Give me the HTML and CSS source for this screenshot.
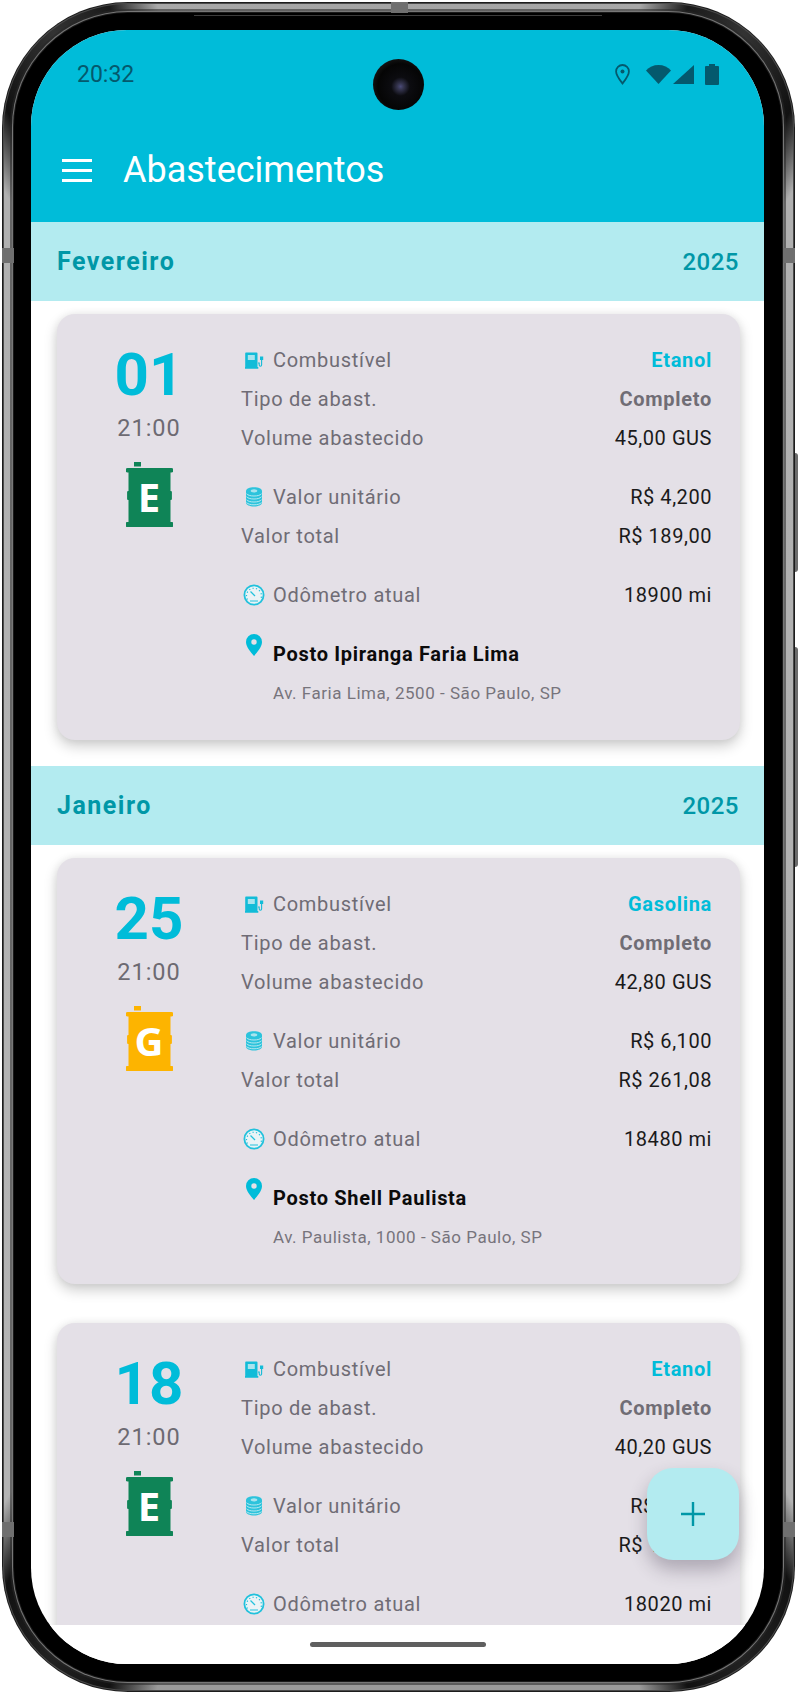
FILE: index.html
```html
<!DOCTYPE html>
<html lang="pt-BR">

<head>
    <meta charset="UTF-8">
    <meta name="viewport" content="width=device-width, initial-scale=1.0">
    <title>Abastecimentos</title>
    <link rel="stylesheet" href="styles.css">
</head>

<body>
    <svg class="defs" width="0" height="0">
        <symbol id="icon-pump" viewBox="0 0 22 22">
            <path fill="#12bcd8" d="M3 3.500h10.500a1 1 0 0 1 1 1V18h.8v1.800H2V18h.2V4.500a1 1 0 0 1 .8-1z"/>
            <path fill="#a9e4ee" d="M4.800 6h7v5h-7z"/>
            <path fill="none" stroke="#12bcd8" stroke-width="1.100" d="M15 14h1.200v2a1.200 1.200 0 0 0 2.400 0v-6"/>
            <path fill="#12bcd8" d="M17 7.500h3.200V11H17z"/>
        </symbol>
        <symbol id="icon-coins" viewBox="0 0 22 22">
            <path fill="#2cc3dc" d="M3 5c0-2.200 3.600-3.700 8-3.700S19 2.800 19 5v11.500c0 2.400-3.600 4-8 4s-8-1.600-8-4z"/>
            <ellipse cx="11" cy="4.800" rx="3.300" ry="1.600" fill="#a9e4ee"/>
            <path fill="none" stroke="#c5ecf2" stroke-width="0.900" d="M3.500 7.800c1.500 1.500 4 2.200 7.500 2.200s6-.7 7.500-2.200M3.500 10.800c1.500 1.500 4 2.200 7.500 2.200s6-.7 7.500-2.200M3.500 13.800c1.500 1.500 4 2.200 7.500 2.200s6-.7 7.500-2.200M3.500 16.600c1.500 1.500 4 2.200 7.500 2.200s6-.7 7.500-2.200"/>
        </symbol>
        <symbol id="icon-gauge" viewBox="0 0 22 22">
            <circle cx="11" cy="11" r="9.600" fill="#eaf3f6" stroke="#22c1dc" stroke-width="1.800"/>
            <path fill="none" stroke="#22c1dc" stroke-width="1.200" stroke-dasharray="1.200 2.300" d="M4.500 15.500A7.500 7.500 0 1 1 17.500 15.500"/>
            <path stroke="#22c1dc" stroke-width="1.300" d="M7.500 7.500l4.500 4.500"/>
            <path stroke="#22c1dc" stroke-width="2" stroke-dasharray="1 1" d="M7.500 17h7"/>
        </symbol>
        <symbol id="icon-pin" viewBox="0 0 16 22">
            <path fill="#00bcd9" fill-rule="evenodd" d="M8 0a8 8 0 0 1 8 8c0 5-5 10.500-8 14C5 18.500 0 13 0 8a8 8 0 0 1 8-8zm0 5.300a2.700 2.700 0 1 0 0 5.400 2.700 2.700 0 0 0 0-5.400z"/>
        </symbol>
        <symbol id="barrel-shape" viewBox="0 0 47 65">
            <path d="M8 0h7v4.500H8zM1.500 6h44a2.250 2.250 0 0 1 0 4.500H44.500V29h.4a1 1 0 0 1 1 1v7a1 1 0 0 1-1 1h-.4v22h1a2.500 2.500 0 0 1 0 5h-44a2.500 2.500 0 0 1 0-5h1V38h-.4a1 1 0 0 1-1-1v-7a1 1 0 0 1 1-1h.4V10.500h-1a2.250 2.250 0 0 1 0-4.500z"/>
        </symbol>
    </svg>

    <div class="phone">
        <span class="band band-top"></span>
        <span class="band band-left-up"></span>
        <span class="band band-right-up"></span>
        <span class="band band-left-down"></span>
        <span class="band band-right-down"></span>
        <span class="side-key key-1"></span>
        <span class="side-key key-2"></span>

        <div class="metal">
            <div class="bezel">
                <span class="bezel-step"></span>
                <div class="screen">
                    <span class="camera"></span>

                    <header class="app-bar">
                        <div class="status-bar">
                            <span class="clock">20:32</span>
                            <div class="status-icons">
                                <svg class="st-pin" viewBox="0 0 15 21"><path fill="none" stroke="#04596d" stroke-width="1.800" d="M7.500 1a6.400 6.400 0 0 1 6.400 6.400c0 4-3.800 8.600-6.400 12-2.600-3.400-6.400-8-6.400-12A6.400 6.400 0 0 1 7.500 1z"/><circle cx="7.500" cy="7.500" r="2" fill="#04596d"/></svg>
                                <svg class="st-wifi" viewBox="0 0 25 19"><path fill="#04596d" d="M0 5.500C3 2 7.500 0 12.500 0S22 2 25 5.500L12.500 19z"/></svg>
                                <svg class="st-signal" viewBox="0 0 21 19"><path fill="#04596d" d="M0 19L21 0v19z"/></svg>
                                <svg class="st-battery" viewBox="0 0 14 21"><path fill="#04596d" d="M4 0h6v2h3a1 1 0 0 1 1 1v17a1 1 0 0 1-1 1H1a1 1 0 0 1-1-1V3a1 1 0 0 1 1-1h3z"/></svg>
                            </div>
                        </div>
                        <div class="toolbar">
                            <div class="menu-icon"><span></span><span></span><span></span></div>
                            <h1 class="title">Abastecimentos</h1>
                        </div>
                    </header>

                    <main class="list">
                        <div class="month-bar">
                            <span class="month">Fevereiro</span>
                            <span class="year">2025</span>
                        </div>

                        <article class="card">
                            <div class="date-col">
                                <div class="day">01</div>
                                <div class="time">21:00</div>
                                <svg class="barrel barrel-e" viewBox="0 0 47 65"><use href="#barrel-shape"/><text class="barrel-letter" x="23" y="50">E</text></svg>
                            </div>
                            <div class="info-col">
                                <div class="group">
                                    <div class="row"><span class="label"><svg class="ic"><use href="#icon-pump"/></svg>Combustível</span><span class="fuel">Etanol</span></div>
                                    <div class="row"><span class="label">Tipo de abast.</span><span class="kind">Completo</span></div>
                                    <div class="row"><span class="label">Volume abastecido</span><span class="value">45,00 GUS</span></div>
                                </div>
                                <div class="group">
                                    <div class="row"><span class="label"><svg class="ic"><use href="#icon-coins"/></svg>Valor unitário</span><span class="value">R$ 4,200</span></div>
                                    <div class="row"><span class="label">Valor total</span><span class="value">R$ 189,00</span></div>
                                </div>
                                <div class="group">
                                    <div class="row"><span class="label"><svg class="ic"><use href="#icon-gauge"/></svg>Odômetro atual</span><span class="value">18900 mi</span></div>
                                </div>
                                <div class="group">
                                    <div class="row"><span class="place"><svg class="ic ic-pin"><use href="#icon-pin"/></svg>Posto Ipiranga Faria Lima</span></div>
                                    <div class="row"><span class="address">Av. Faria Lima, 2500 - São Paulo, SP</span></div>
                                </div>
                            </div>
                        </article>

                        <div class="month-bar month-bar-next">
                            <span class="month">Janeiro</span>
                            <span class="year">2025</span>
                        </div>

                        <article class="card">
                            <div class="date-col">
                                <div class="day">25</div>
                                <div class="time">21:00</div>
                                <svg class="barrel barrel-g" viewBox="0 0 47 65"><use href="#barrel-shape"/><text class="barrel-letter" x="23" y="50">G</text></svg>
                            </div>
                            <div class="info-col">
                                <div class="group">
                                    <div class="row"><span class="label"><svg class="ic"><use href="#icon-pump"/></svg>Combustível</span><span class="fuel">Gasolina</span></div>
                                    <div class="row"><span class="label">Tipo de abast.</span><span class="kind">Completo</span></div>
                                    <div class="row"><span class="label">Volume abastecido</span><span class="value">42,80 GUS</span></div>
                                </div>
                                <div class="group">
                                    <div class="row"><span class="label"><svg class="ic"><use href="#icon-coins"/></svg>Valor unitário</span><span class="value">R$ 6,100</span></div>
                                    <div class="row"><span class="label">Valor total</span><span class="value">R$ 261,08</span></div>
                                </div>
                                <div class="group">
                                    <div class="row"><span class="label"><svg class="ic"><use href="#icon-gauge"/></svg>Odômetro atual</span><span class="value">18480 mi</span></div>
                                </div>
                                <div class="group">
                                    <div class="row"><span class="place"><svg class="ic ic-pin"><use href="#icon-pin"/></svg>Posto Shell Paulista</span></div>
                                    <div class="row"><span class="address">Av. Paulista, 1000 - São Paulo, SP</span></div>
                                </div>
                            </div>
                        </article>

                        <article class="card card-next">
                            <div class="date-col">
                                <div class="day">18</div>
                                <div class="time">21:00</div>
                                <svg class="barrel barrel-e" viewBox="0 0 47 65"><use href="#barrel-shape"/><text class="barrel-letter" x="23" y="50">E</text></svg>
                            </div>
                            <div class="info-col">
                                <div class="group">
                                    <div class="row"><span class="label"><svg class="ic"><use href="#icon-pump"/></svg>Combustível</span><span class="fuel">Etanol</span></div>
                                    <div class="row"><span class="label">Tipo de abast.</span><span class="kind">Completo</span></div>
                                    <div class="row"><span class="label">Volume abastecido</span><span class="value">40,20 GUS</span></div>
                                </div>
                                <div class="group">
                                    <div class="row"><span class="label"><svg class="ic"><use href="#icon-coins"/></svg>Valor unitário</span><span class="value">R$ 4,150</span></div>
                                    <div class="row"><span class="label">Valor total</span><span class="value">R$ 166,83</span></div>
                                </div>
                                <div class="group">
                                    <div class="row"><span class="label"><svg class="ic"><use href="#icon-gauge"/></svg>Odômetro atual</span><span class="value">18020 mi</span></div>
                                </div>
                            </div>
                        </article>
                    </main>

                    <div class="gesture-bar"><span class="home-pill"></span></div>

                    <button class="fab">
                        <svg viewBox="0 0 24 24" width="24" height="24"><path fill="#0097a7" d="M10.800 0h2.400v10.800H24v2.400H13.200V24h-2.400V13.200H0v-2.400h10.800z"/></svg>
                    </button>
                </div>
            </div>
        </div>
    </div>
</body>

</html>
```

FILE: styles.css
```css
* {
    box-sizing: border-box;
}

html,
body {
    margin: 0;
    height: 1693px;
    overflow: hidden;
    background-color: #fff;
}

body {
    padding: 2px 0 0 2px;
    font-family: Roboto, "Liberation Sans", sans-serif;
}

.defs {
    position: absolute;
}

/* phone frame */
.phone {
    position: relative;
    width: 793px;
    height: 1690px;
    padding: 1px;
    border-radius: 126px;
    background-color: #1c1c1c;
}

.metal {
    height: 100%;
    padding: 10px 12px 10px 11px;
    border-radius: 125px;
    background: conic-gradient(#a4a4a4 0deg, #a8a8a8 16deg, #1a1a1a 19deg, #333 23deg, #111 28deg, #b0b0b0 31deg, #b4b4b4 149deg, #111 152deg, #222 157deg, #111 161deg, #9a9a9a 164deg, #9a9a9a 196deg, #111 199deg, #222 203deg, #111 208deg, #b4b4b4 211deg, #b0b0b0 329deg, #111 332deg, #333 337deg, #1a1a1a 341deg, #a8a8a8 344deg, #a4a4a4 360deg);
    box-shadow: inset 0 0 0 1px #4a4a4a;
}

.bezel {
    position: relative;
    height: 100%;
    padding: 17px 18px 17px 17px;
    border-radius: 114px;
    background-color: #000;
    box-shadow: 0 0 0 1px #1a1a1a, 0 0 0 2px #777, 0 0 0 4px rgba(40, 40, 40, 0.55);
}

.bezel-step {
    position: absolute;
    top: 2px;
    left: 180px;
    right: 180px;
    height: 1px;
    background-color: #3c3c3c;
}

.band {
    position: absolute;
    z-index: 1;
    background-color: #6f6f6f;
}

.band-top {
    top: 0;
    left: 389px;
    width: 17px;
    height: 11px;
}

.band-left-up,
.band-right-up,
.band-left-down,
.band-right-down {
    width: 12px;
    height: 15px;
}

.band-left-up {
    top: 246px;
    left: 0;
}

.band-right-up {
    top: 246px;
    right: 0;
}

.band-left-down {
    top: 1520px;
    left: 0;
}

.band-right-down {
    top: 1520px;
    right: 0;
}

.side-key {
    position: absolute;
    right: -3px;
    width: 3px;
    border-radius: 0 3px 3px 0;
    background-color: #6b6b6b;
}

.key-1 {
    top: 451px;
    height: 119px;
}

.key-2 {
    top: 645px;
    height: 220px;
}

/* screen */
.screen {
    position: relative;
    display: flex;
    flex-direction: column;
    height: 100%;
    border-radius: 96px;
    overflow: hidden;
    background-color: #fff;
}

.camera {
    position: absolute;
    top: 29px;
    left: 342px;
    width: 51px;
    height: 51px;
    border-radius: 50%;
    background: radial-gradient(circle at 54% 54%, #4a4a78 0, #35354f 8%, #0c0c10 24%, #050505 58%, #121212 72%, #0a0a0a 100%);
}

.app-bar {
    background-color: #00bcd9;
}

.status-bar {
    display: flex;
    align-items: center;
    justify-content: space-between;
    height: 88px;
    padding: 0 45px 0 46px;
}

.clock {
    font-size: 23px;
    color: #04596d;
}

.status-icons {
    display: flex;
    align-items: center;
}

.st-pin {
    width: 15px;
    height: 21px;
    margin-right: 16px;
}

.st-wifi {
    width: 25px;
    height: 19px;
    margin-right: 2px;
}

.st-signal {
    width: 21px;
    height: 19px;
    margin-right: 11px;
}

.st-battery {
    width: 14px;
    height: 21px;
}

.toolbar {
    display: flex;
    align-items: center;
    height: 104px;
    padding-left: 31px;
}

.menu-icon {
    display: flex;
    flex-direction: column;
    gap: 7px;
    width: 30px;
    margin-right: 31px;
}

.menu-icon span {
    height: 3px;
    background-color: #fff;
}

.title {
    margin: 0;
    font-size: 36px;
    font-weight: 400;
    letter-spacing: 0;
    color: #fff;
}

/* list */
.list {
    flex: 1;
    min-height: 0;
    overflow: hidden;
}

.month-bar {
    display: flex;
    align-items: center;
    justify-content: space-between;
    height: 79px;
    padding: 0 25px 0 26px;
    background-color: #b3ebf0;
    color: #0097a7;
}

.month-bar-next {
    margin-top: 26px;
}

.month {
    font-size: 25px;
    font-weight: 700;
    letter-spacing: 1.5px;
}

.year {
    font-size: 24px;
    font-weight: 500;
    letter-spacing: 0.5px;
}

.card {
    display: flex;
    margin: 13px 24px 0 26px;
    padding: 26px 28px 28px 0;
    border-radius: 18px;
    background-color: #e4e0e7;
    box-shadow: 0 6px 14px rgba(0, 0, 0, 0.2), 0 0 8px rgba(0, 0, 0, 0.06);
}

.card-next {
    margin-top: 39px;
}

.date-col {
    display: flex;
    flex-direction: column;
    align-items: center;
    width: 184px;
    flex-shrink: 0;
}

.day {
    margin-top: 3px;
    font-size: 60px;
    line-height: 64px;
    font-weight: 700;
    color: #00bcd9;
}

.time {
    margin-top: 7px;
    font-size: 23.500px;
    line-height: 28px;
    letter-spacing: 1px;
    color: #6d6a72;
}

.barrel {
    width: 47px;
    height: 65px;
    margin-top: 20px;
}

.barrel-e {
    fill: #0f8457;
}

.barrel-g {
    fill: #fdb400;
}

.barrel-letter {
    font-family: "Open Sans", sans-serif;
    font-size: 40px;
    font-weight: 700;
    text-anchor: middle;
    fill: #fff;
}

.info-col {
    flex: 1;
    display: flex;
    flex-direction: column;
    gap: 20px;
}

.row {
    display: flex;
    align-items: center;
    justify-content: space-between;
    height: 39px;
    font-size: 20px;
    letter-spacing: 0.7px;
}

.label {
    display: flex;
    align-items: center;
    color: #6f6c75;
}

.ic {
    width: 22px;
    height: 22px;
    margin-left: 2px;
    margin-right: 8px;
}

.fuel {
    font-weight: 700;
    color: #00bcd9;
}

.kind {
    font-weight: 700;
    color: #706d75;
}

.value {
    letter-spacing: 0.55px;
    color: #1a1a1a;
}

.place {
    display: flex;
    align-items: center;
    font-weight: 700;
    color: #0b0b0b;
}

.ic-pin {
    margin-top: -18px;
}

.address {
    margin-left: 32px;
    font-size: 17px;
    letter-spacing: 0.53px;
    color: #77747c;
}

.gesture-bar {
    display: flex;
    justify-content: center;
    flex-shrink: 0;
    height: 39px;
    padding-top: 17px;
    background-color: #fff;
}

.home-pill {
    width: 176px;
    height: 5px;
    border-radius: 3px;
    background-color: #5f5f5f;
}

.fab {
    position: absolute;
    right: 25px;
    bottom: 104px;
    display: flex;
    align-items: center;
    justify-content: center;
    width: 92px;
    height: 92px;
    padding: 0;
    border: none;
    border-radius: 26px;
    background-color: #b3ebf0;
    box-shadow: 0 10px 18px rgba(60, 50, 70, 0.32);
}
```
